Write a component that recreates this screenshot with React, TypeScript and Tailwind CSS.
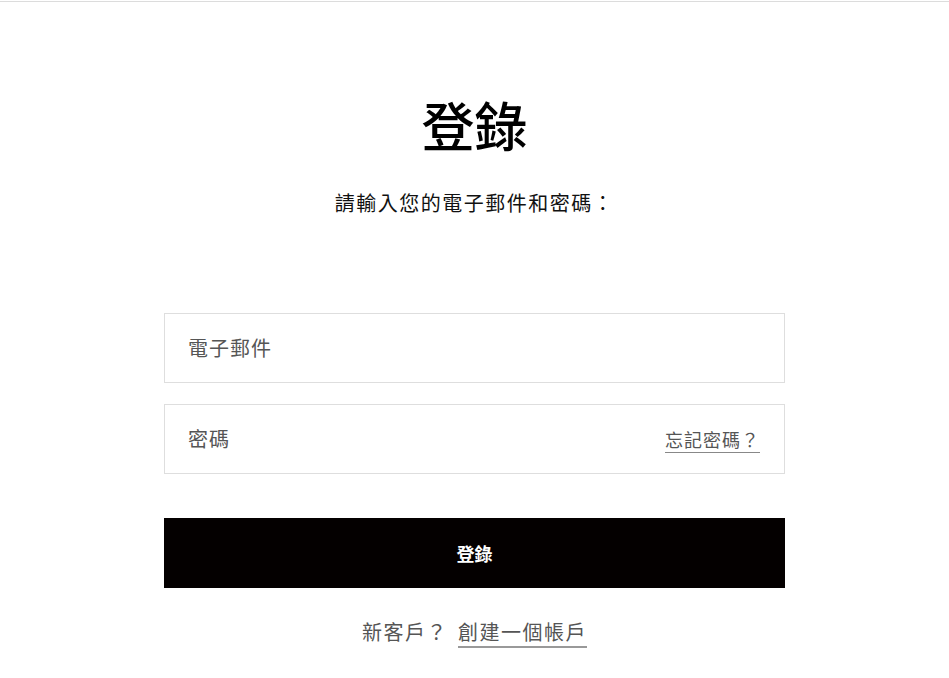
const cjk = { fontFamily: '"Noto Sans CJK TC", "Noto Sans", sans-serif' };

export default function App() {
  return (
    <div className="min-h-screen bg-white text-black" style={cjk}>
      <div className="mt-px h-px bg-[#dcdcdc]" />
      <main className="mx-auto w-[621px] pt-[96px]">
        <h1 className="text-center text-[53px] leading-[52px] font-medium">登錄</h1>
        <p className="mt-[39px] text-center text-[20px] leading-[28px] tracking-[1.5px] text-[#111]">
          請輸入您的電子郵件和密碼：
        </p>

        <form className="mt-[96px] flex flex-col">
          <div className="flex h-[70px] items-center border border-[#dedede] px-[23px]">
            <input
              type="email"
              placeholder="電子郵件"
              className="w-full bg-transparent text-[20px] tracking-[1px] text-[#555] placeholder:text-[#555] outline-none"
            />
          </div>
          <div className="mt-[21px] flex h-[70px] items-center justify-between border border-[#dedede] pl-[23px] pr-[24px]">
            <input
              type="password"
              placeholder="密碼"
              className="w-full bg-transparent text-[20px] tracking-[1px] text-[#555] placeholder:text-[#555] outline-none"
            />
            <a
              href="#"
              className="shrink-0 text-[18px] leading-[24px] tracking-[1px] text-[#555] underline decoration-[#888] underline-offset-[5px]"
            >
              忘記密碼？
            </a>
          </div>
          <button
            type="button"
            className="mt-[44px] h-[70px] w-full bg-[#040000] text-[18px] font-bold text-white"
          >
            登錄
          </button>
        </form>

        <p className="mt-[30px] text-center text-[20px] leading-[28px] tracking-[1.5px] text-[#555]">
          新客戶？
          <a
            href="#"
            className="ml-[10px] underline decoration-[#999] decoration-[2px] underline-offset-[6px]"
          >
            創建一個帳戶
          </a>
        </p>
      </main>
    </div>
  );
}
